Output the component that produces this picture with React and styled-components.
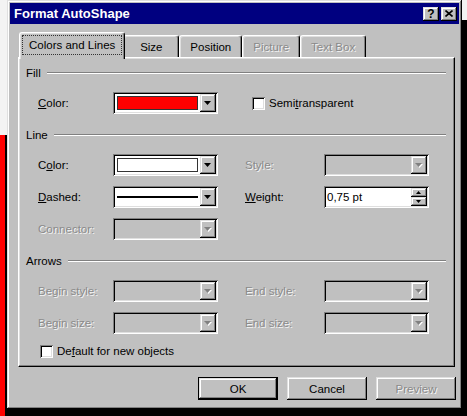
import React from "react";
import styled, { createGlobalStyle, css } from "styled-components";

const FACE = "#c0c0c0";

const GlobalStyle = createGlobalStyle`
  html, body {
    margin: 0;
    padding: 0;
  }
  body {
    font-family: "Liberation Sans", Arial, sans-serif;
    font-size: 11.5px;
    color: #000;
  }
`;

const raised = css`
  box-shadow: inset -1px -1px #000, inset 1px 1px #dfdfdf,
    inset -2px -2px #808080, inset 2px 2px #fff;
`;

const sunken = css`
  box-shadow: inset 1px 1px #808080, inset -1px -1px #fff,
    inset 2px 2px #000, inset -2px -2px #dfdfdf;
`;

const disabledText = css`
  color: #8a8a8a;
  text-shadow: 1px 1px 0 #f4f4f4;
`;

const Desktop = styled.div`
  width: 467px;
  height: 416px;
  overflow: hidden;
  box-sizing: border-box;
  padding-left: 7px;
  background: linear-gradient(#f00, #f00) 0 135px / 5px 281px no-repeat,
    linear-gradient(#000, #000) 5px 135px / 2px 281px no-repeat,
    linear-gradient(#000, #000) 0 409px / 100% 7px no-repeat,
    linear-gradient(#000, #000) 462px 20px / 5px 396px no-repeat, #f3f3f3;
`;

const Window = styled.div`
  width: 455px;
  height: 409px;
  box-sizing: border-box;
  padding: 3px;
  background: ${FACE};
  display: flex;
  flex-direction: column;
  ${raised}
`;

const TitleBar = styled.div`
  height: 21px;
  flex: none;
  background: #000080;
  display: flex;
  align-items: center;
  justify-content: space-between;
  padding: 0 2px 0 4px;
`;

const Title = styled.span`
  color: #fff;
  font-weight: bold;
  font-size: 13px;
`;

const CaptionButtons = styled.div`
  display: flex;
  gap: 2px;
`;

const CaptionButton = styled.div`
  width: 16px;
  height: 14px;
  background: ${FACE};
  display: flex;
  align-items: center;
  justify-content: center;
  font-weight: bold;
  font-size: 12px;
  line-height: 14px;
  ${raised}
`;

const Body = styled.div`
  flex: 1;
  display: flex;
  flex-direction: column;
  padding: 8px 4px 6px 8px;
`;

const TabStrip = styled.div`
  display: flex;
  align-items: flex-end;
  padding-left: 3px;
`;

const Tab = styled.div`
  position: relative;
  box-sizing: border-box;
  height: ${(p) => (p.$active ? "27px" : "22px")};
  margin: ${(p) => (p.$active ? "0 -2px -2px -2px" : "0")};
  z-index: ${(p) => (p.$active ? 1 : 0)};
  min-width: 56px;
  padding: ${(p) => (p.$active ? "2px 2px 4px" : "0 10px")};
  display: flex;
  align-items: center;
  justify-content: center;
  background: ${FACE};
  border: 1px solid;
  border-color: #fff #000 transparent #fff;
  border-bottom: none;
  border-radius: 3px 3px 0 0;
  box-shadow: inset -1px 0 #808080, inset 1px 1px #dfdfdf;
  ${(p) => p.$disabled && disabledText}
`;

const FocusRing = styled.span`
  height: 100%;
  box-sizing: border-box;
  display: flex;
  align-items: center;
  padding: 0 6px;
  border: 1px dotted #333;
`;

const Panel = styled.div`
  height: 310px;
  box-sizing: border-box;
  padding: 8px 7px 8px 7px;
  background: ${FACE};
  border: 1px solid;
  border-color: #fff #000 #000 #fff;
  box-shadow: inset -1px -1px #808080, inset 1px 1px #dfdfdf;
  display: flex;
  flex-direction: column;
`;

const Heading = styled.div`
  height: 14px;
  display: flex;
  align-items: center;
  gap: 6px;
  margin-top: ${(p) => (p.$first ? "0" : "14px")};
  margin-right: 1px;

  &::after {
    content: "";
    flex: 1;
    height: 0;
    border-top: 1px solid #808080;
    border-bottom: 1px solid #fff;
  }
`;

const FieldGrid = styled.div`
  display: grid;
  grid-template-columns: 75px 105px 106px 105px;
  grid-auto-rows: 22px;
  row-gap: 10px;
  margin: 12px 0 0 12px;
`;

const Label = styled.div`
  display: flex;
  align-items: center;
  padding-left: ${(p) => (p.$second ? "27px" : "0")};
  ${(p) => p.$disabled && disabledText}
`;

const Key = styled.span`
  text-decoration: underline;
  text-underline-offset: 1px;
`;

const Combo = styled.div`
  box-sizing: border-box;
  width: 105px;
  height: 22px;
  padding: 2px;
  display: flex;
  background: ${(p) => (p.$disabled ? FACE : "#fff")};
  ${sunken}
`;

const ComboValue = styled.div`
  flex: 1;
  display: flex;
  align-items: center;
  padding: 2px;
`;

const Swatch = styled.div`
  flex: 1;
  align-self: stretch;
  background: ${(p) => p.$color};
  border: 1px solid #333;
`;

const Stroke = styled.div`
  flex: 1;
  height: 2px;
  background: #000;
`;

const ComboButton = styled.div`
  width: 16px;
  flex: none;
  background: ${FACE};
  display: flex;
  align-items: center;
  justify-content: center;
  ${raised}
`;

const CheckRow = styled.label`
  display: flex;
  align-items: center;
  gap: 4px;
  grid-column: ${(p) => (p.$span ? "3 / span 2" : "auto")};
  padding-left: ${(p) => p.$indent || 0}px;
  margin-top: ${(p) => p.$top || 0}px;
  min-height: 14px;
`;

const CheckBox = styled.span`
  width: 13px;
  height: 13px;
  flex: none;
  background: #fff;
  ${sunken}
`;

const Spin = styled.div`
  box-sizing: border-box;
  width: 105px;
  height: 22px;
  padding: 2px;
  display: flex;
  background: #fff;
  ${sunken}
`;

const SpinText = styled.div`
  flex: 1;
  display: flex;
  align-items: center;
  padding-left: 1px;
`;

const SpinButtons = styled.div`
  width: 16px;
  display: flex;
  flex-direction: column;
`;

const SpinButton = styled.div`
  flex: 1;
  background: ${FACE};
  display: flex;
  align-items: center;
  justify-content: center;
  ${raised}
`;

const Footer = styled.div`
  display: flex;
  justify-content: flex-end;
  gap: 9px;
  margin-top: 10px;
  margin-right: -1px;
`;

const PushButton = styled.div`
  box-sizing: border-box;
  width: 80px;
  height: 23px;
  display: flex;
  align-items: center;
  justify-content: center;
  background: ${FACE};
  ${raised}
  ${(p) =>
    p.$default &&
    css`
      border: 1px solid #000;
    `}
  ${(p) => p.$disabled && disabledText}
`;

const Arrow = ({ up, disabled, small }) => {
  const w = small ? 5 : 7;
  const h = small ? 3 : 4;
  const pts = up ? `0,${h} ${w},${h} ${w / 2},0` : `0,0 ${w},0 ${w / 2},${h}`;
  return (
    <svg width={w + 1} height={h + 1} viewBox={`0 0 ${w + 1} ${h + 1}`}>
      {disabled && (
        <polygon points={pts} fill="#fff" transform="translate(1,1)" />
      )}
      <polygon points={pts} fill={disabled ? "#808080" : "#000"} />
    </svg>
  );
};

const CloseGlyph = () => (
  <svg width="8" height="7" viewBox="0 0 8 7">
    <path d="M0.5 0.5 L7.5 6.5 M7.5 0.5 L0.5 6.5" stroke="#000" strokeWidth="1.6" />
  </svg>
);

const Dropdown = ({ disabled, children }) => (
  <Combo $disabled={disabled}>
    <ComboValue>{children}</ComboValue>
    <ComboButton>
      <Arrow disabled={disabled} />
    </ComboButton>
  </Combo>
);

const tabs = [
  { name: "Colors and Lines", active: true },
  { name: "Size" },
  { name: "Position" },
  { name: "Picture", disabled: true },
  { name: "Text Box", disabled: true },
];

export default function App() {
  return (
    <>
      <GlobalStyle />
      <Desktop>
        <Window>
          <TitleBar>
            <Title>Format AutoShape</Title>
            <CaptionButtons>
              <CaptionButton>?</CaptionButton>
              <CaptionButton>
                <CloseGlyph />
              </CaptionButton>
            </CaptionButtons>
          </TitleBar>
          <Body>
            <TabStrip>
              {tabs.map((t) => (
                <Tab key={t.name} $active={t.active} $disabled={t.disabled}>
                  {t.active ? <FocusRing>{t.name}</FocusRing> : t.name}
                </Tab>
              ))}
            </TabStrip>
            <Panel>
              <Heading $first>Fill</Heading>
              <FieldGrid>
                <Label>
                  <span>
                    <Key>C</Key>olor:
                  </span>
                </Label>
                <Dropdown>
                  <Swatch $color="#ff0000" />
                </Dropdown>
                <CheckRow $span $indent={34}>
                  <CheckBox />
                  <span>
                    Semi<Key>t</Key>ransparent
                  </span>
                </CheckRow>
              </FieldGrid>

              <Heading>Line</Heading>
              <FieldGrid>
                <Label>
                  <span>
                    C<Key>o</Key>lor:
                  </span>
                </Label>
                <Dropdown>
                  <Swatch $color="#ffffff" />
                </Dropdown>
                <Label $second $disabled>
                  Style:
                </Label>
                <Dropdown disabled />

                <Label>
                  <span>
                    <Key>D</Key>ashed:
                  </span>
                </Label>
                <Dropdown>
                  <Stroke />
                </Dropdown>
                <Label $second>
                  <span>
                    <Key>W</Key>eight:
                  </span>
                </Label>
                <Spin>
                  <SpinText>0,75 pt</SpinText>
                  <SpinButtons>
                    <SpinButton>
                      <Arrow up small />
                    </SpinButton>
                    <SpinButton>
                      <Arrow small />
                    </SpinButton>
                  </SpinButtons>
                </Spin>

                <Label $disabled>Connector:</Label>
                <Dropdown disabled />
              </FieldGrid>

              <Heading>Arrows</Heading>
              <FieldGrid>
                <Label $disabled>Begin style:</Label>
                <Dropdown disabled />
                <Label $second $disabled>
                  End style:
                </Label>
                <Dropdown disabled />
                <Label $disabled>Begin size:</Label>
                <Dropdown disabled />
                <Label $second $disabled>
                  End size:
                </Label>
                <Dropdown disabled />
              </FieldGrid>

              <CheckRow $indent={14} $top={10}>
                <CheckBox />
                <span>
                  De<Key>f</Key>ault for new objects
                </span>
              </CheckRow>
            </Panel>
            <Footer>
              <PushButton $default>OK</PushButton>
              <PushButton>Cancel</PushButton>
              <PushButton $disabled>Preview</PushButton>
            </Footer>
          </Body>
        </Window>
      </Desktop>
    </>
  );
}
